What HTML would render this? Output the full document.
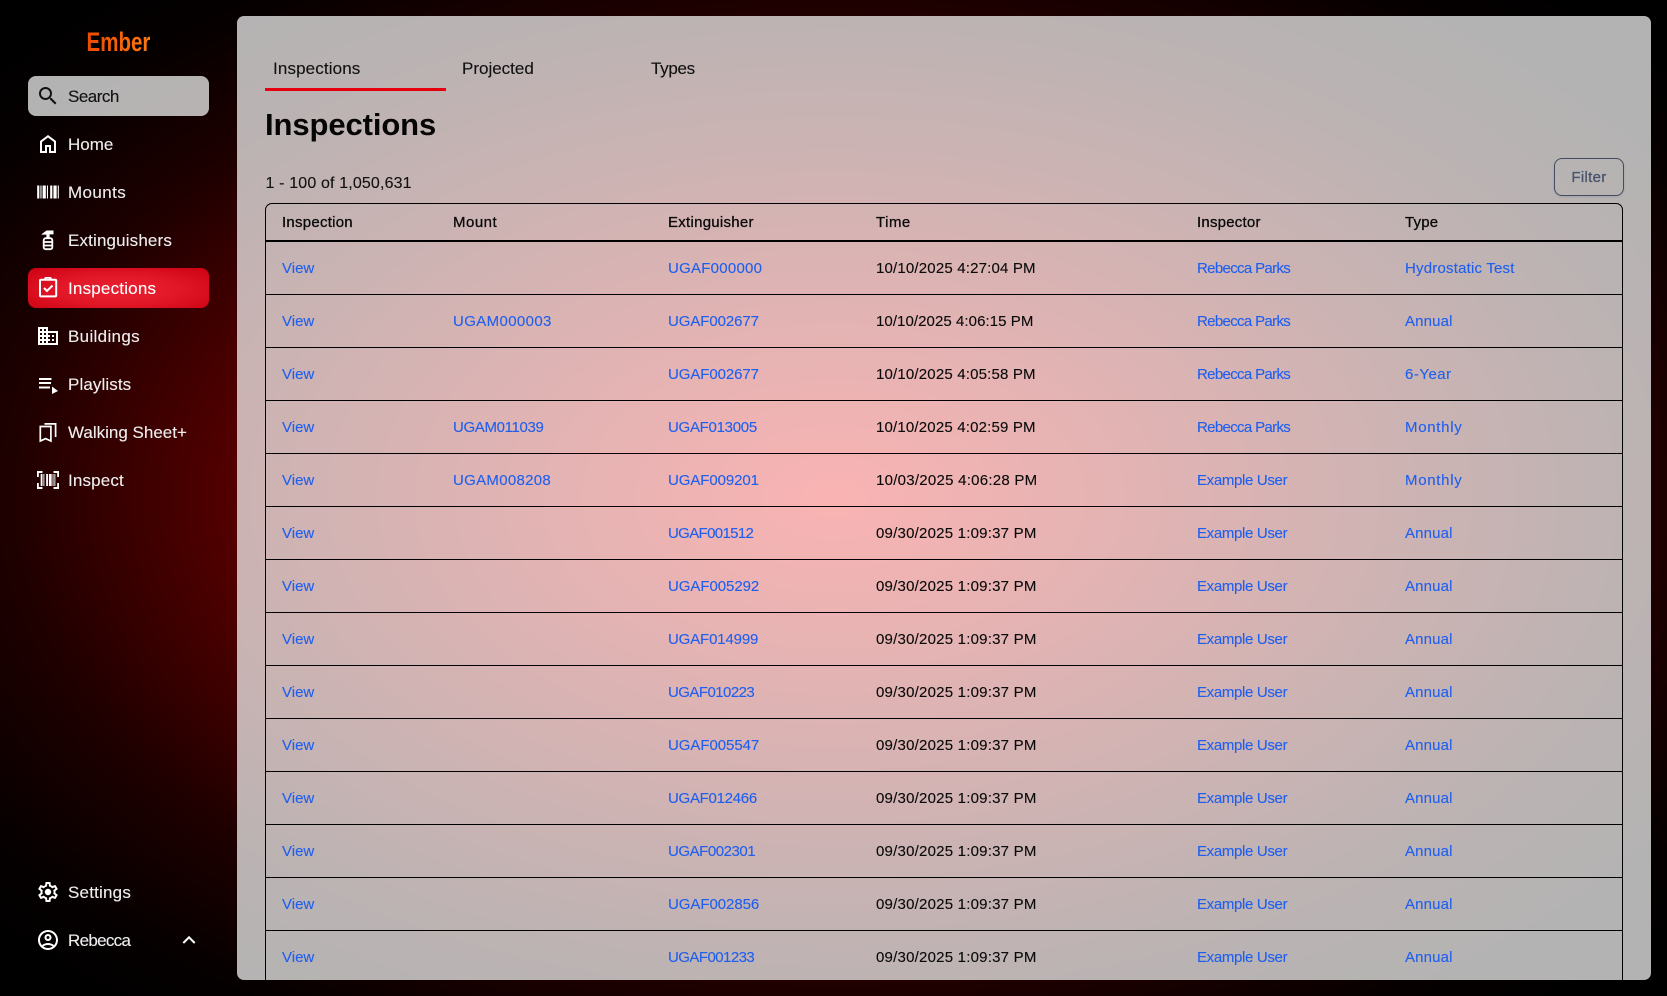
<!DOCTYPE html>
<html lang="en"><head><meta charset="utf-8"><title>Ember - Inspections</title>
<style>
*{box-sizing:border-box}
html,body{margin:0;padding:0;width:1667px;height:996px;overflow:hidden}
body{font-family:"Liberation Sans",sans-serif;background:radial-gradient(ellipse farthest-corner at 50% 50%,rgb(238,0,0) 0,rgb(85,0,0) 50%,rgb(30,0,0) 70%,rgb(6,0,0) 85%,#000 95%);position:relative;color:#0a0a0a}
.logo{position:absolute;left:28px;width:181px;top:26px;text-align:center;font-size:27px;font-weight:700;line-height:32px;height:32px;transform:scaleX(.76)}
.logo span{background:linear-gradient(90deg,#ee4a00,#ff7a10);-webkit-background-clip:text;background-clip:text;color:transparent}
.nav{position:absolute;left:28px;width:181px;height:40px;border-radius:8px;color:#eee;font-size:17px;line-height:41px;padding-left:40px;white-space:nowrap;-webkit-text-stroke:.12px}
.nav svg{position:absolute;left:8px;top:8px;width:24px;height:24px;fill:#fff}
.nav.search{background:rgba(255,255,255,.7);color:#111;letter-spacing:-.5px}
.nav.search svg{fill:#111}
.nav.on{background:radial-gradient(ellipse at 50% 55%,#e9202f 0,#e21828 45%,#cb0012 100%);color:#fff}
.main{position:absolute;left:237px;top:16px;width:1414px;height:964px;background:rgba(255,255,255,.7);border-radius:7px;overflow:hidden}
.tab{position:absolute;top:41px;font-size:17px;line-height:24px;color:#111;white-space:nowrap;-webkit-text-stroke:.12px}
.ul{position:absolute;left:28px;top:72px;width:181px;height:3px;background:#e6000f}
h1{position:absolute;margin:0;left:28px;top:90px;font-size:31px;line-height:38px;font-weight:700;letter-spacing:-.1px;color:#050505}
.count{position:absolute;left:28.5px;top:157px;font-size:16px;line-height:22px;letter-spacing:.15px;color:#111;-webkit-text-stroke:.12px}
.filter{position:absolute;left:1317px;top:142px;width:70px;height:38px;border:1px solid #3f4c61;border-radius:8px;font-size:15px;line-height:37px;text-align:center;color:#47536a;-webkit-text-stroke:.25px #47536a;letter-spacing:.3px;box-shadow:0 1px 2px rgba(0,0,0,.1)}
.wrap{position:absolute;left:28px;top:187px;width:1358px;border:1px solid #000;border-bottom:0;border-radius:7px 7px 0 0}
table{border-collapse:separate;border-spacing:0;table-layout:fixed;width:1356px;font-size:15px}
th{height:38px;border-bottom:2px solid #000;text-align:left;font-weight:400;padding:0 0 0 16px;-webkit-text-stroke:.3px #0a0a0a;white-space:nowrap}
td{height:53px;border-bottom:1px solid #000;padding:0 0 0 16px;white-space:nowrap;color:#0a0a0a;-webkit-text-stroke:.12px}
a{color:#1f5ff0;text-decoration:none}
.t{letter-spacing:.18px}
.r{letter-spacing:-.66px}
.e{letter-spacing:-.33px}
.m{letter-spacing:.7px}
.n{letter-spacing:.15px}
</style></head>
<body>
<div class="logo"><span>Ember</span></div>
<div class="nav search" style="top:76px"><svg viewBox="0 0 24 24"><path d="M15.5 14h-.79l-.28-.27A6.471 6.471 0 0 0 16 9.5 6.5 6.5 0 1 0 9.5 16c1.61 0 3.09-.59 4.23-1.57l.27.28v.79l5 4.99L20.49 19l-4.99-5zm-6 0C7.01 14 5 11.99 5 9.5S7.01 5 9.5 5 14 7.01 14 9.5 11.99 14 9.5 14z"/></svg>Search</div>
<div class="nav" style="top:124px"><svg viewBox="0 0 24 24"><path d="M6 19h3v-6h6v6h3v-9l-6-4.5L6 10v9Zm-2 2V9l8-6 8 6v12h-7v-6h-2v6H4Z"/></svg>Home</div>
<div class="nav" style="top:172px;letter-spacing:.4px"><svg viewBox="0 0 24 24" style="left:7px;top:7px;width:26px;height:26px"><path d="M2 6h2v12H2V6zm3 0h1v12H5V6zm2 0h3v12H7V6zm4 0h1v12h-1V6zm3 0h2v12h-2V6zm3 0h3v12h-3V6zm4 0h1v12h-1V6z"/></svg>Mounts</div>
<div class="nav" style="top:220px;letter-spacing:.15px"><svg viewBox="0 0 24 24"><path d="M5.500 6.200 10.500 2.500h7V6.400H13.600V10h-3.200V6.600H5.500z"/><rect x="7.700" y="10.200" width="8.600" height="11" rx="2" fill="none" stroke="#fff" stroke-width="1.800"/><path d="M8 14h8M8 17.500h8" stroke="#fff" stroke-width="1.700"/></svg>Extinguishers</div>
<div class="nav on" style="top:268px;letter-spacing:.2px"><svg viewBox="0 0 24 24"><rect x="4" y="3.800" width="16.200" height="16.600" rx="1" fill="none" stroke="#fff" stroke-width="2"/><path d="M9 3.800v-1a1 1 0 0 1 1-1h4a1 1 0 0 1 1 1v1" fill="none" stroke="#fff" stroke-width="1.600"/><path d="M8 12l3 3 5.500-5.500" fill="none" stroke="#fff" stroke-width="2"/></svg>Inspections</div>
<div class="nav" style="top:316px;letter-spacing:.33px"><svg viewBox="0 0 24 24"><path d="M12 7V3H2v18h20V7H12zM6 19H4v-2h2v2zm0-4H4v-2h2v2zm0-4H4V9h2v2zm0-4H4V5h2v2zm4 12H8v-2h2v2zm0-4H8v-2h2v2zm0-4H8V9h2v2zm0-4H8V5h2v2zm10 12h-8v-2h2v-2h-2v-2h2v-2h-2V9h8v10zm-2-8h-2v2h2v-2zm0 4h-2v2h2v-2z"/></svg>Buildings</div>
<div class="nav" style="top:364px;letter-spacing:.1px"><svg viewBox="0 0 24 24"><path d="M3 8V6h12.500v2H3Zm0 4v-2h12v2H3Zm0 4.500v-2h11v2H3Zm13 5.500v-7.500l6 4.500-6 3Z"/></svg>Playlists</div>
<div class="nav" style="top:412px"><svg viewBox="0 0 24 24"><path d="M4.300 6.500h10.600V21l-5.300-2.400L4.300 21zM8.500 3.900H19.600V17" fill="none" stroke="#fff" stroke-width="1.700"/></svg>Walking Sheet+</div>
<div class="nav" style="top:460px;letter-spacing:.15px"><svg viewBox="0 0 24 24" preserveAspectRatio="none" style="left:9px;width:22px"><path d="M0 21v-6h2v4h4v2H0Zm18 0v-2h4v-4h2v6h-6ZM4 18V6h2v12H4Zm3 0V6h1v12H7Zm3 0V6h2v12h-2Zm3 0V6h3v12h-3Zm4 0V6h1v12h-1Zm2 0V6h1v12h-1ZM0 9V3h6v2H2v4H0Zm22 0V5h-4V3h6v6h-2Z"/></svg>Inspect</div>
<div class="nav" style="top:872px;letter-spacing:.2px"><svg viewBox="0 0 24 24"><path d="M19.430 12.980c.04-.32.07-.64.07-.98 0-.34-.03-.66-.07-.98l2.110-1.650c.19-.15.24-.42.12-.64l-2-3.460c-.09-.16-.26-.25-.44-.25-.06 0-.12.01-.17.03l-2.490 1c-.52-.4-1.080-.73-1.690-.98l-.38-2.650C14.460 2.180 14.250 2 14 2h-4c-.25 0-.46.18-.49.42l-.38 2.650c-.61.25-1.170.59-1.690.98l-2.490-1c-.06-.02-.12-.03-.18-.03-.17 0-.34.09-.43.25l-2 3.460c-.13.22-.07.49.12.64l2.110 1.650c-.04.32-.07.65-.07.98 0 .33.03.66.07.98l-2.110 1.650c-.19.15-.24.42-.12.64l2 3.460c.09.16.26.25.44.25.06 0 .12-.01.17-.03l2.490-1c.52.4 1.080.73 1.690.98l.38 2.650c.03.24.24.42.49.42h4c.25 0 .46-.18.49-.42l.38-2.650c.61-.25 1.170-.59 1.690-.98l2.490 1c.06.02.12.03.18.03.17 0 .34-.09.43-.25l2-3.460c.12-.22.07-.49-.12-.64l-2.110-1.650zm-1.980-1.710c.04.31.05.52.05.73 0 .21-.02.43-.05.73l-.14 1.130.89.7 1.080.84-.7 1.210-1.270-.51-1.040-.42-.9.68c-.43.32-.84.56-1.250.73l-1.060.43-.16 1.130-.2 1.350h-1.400l-.19-1.350-.16-1.130-1.060-.43c-.43-.18-.83-.41-1.230-.71l-.91-.7-1.060.43-1.270.51-.7-1.210 1.080-.84.89-.7-.14-1.130c-.03-.31-.05-.54-.05-.74s.02-.43.05-.73l.14-1.130-.89-.7-1.080-.84.7-1.210 1.270.51 1.040.42.9-.68c.43-.32.84-.56 1.250-.73l1.060-.43.16-1.130.2-1.350h1.390l.19 1.350.16 1.130 1.060.43c.43.18.83.41 1.230.71l.91.7 1.060-.43 1.270-.51.7 1.210-1.070.85-.89.7.14 1.130z"/><circle cx="12" cy="12" r="3.200"/></svg>Settings</div>
<div class="nav" style="top:920px;letter-spacing:-.7px"><svg viewBox="0 0 24 24"><path d="M12 2C6.480 2 2 6.480 2 12s4.480 10 10 10 10-4.480 10-10S17.520 2 12 2zM7.350 18.500C8.660 17.560 10.260 17 12 17s3.340.56 4.650 1.500C15.340 19.440 13.740 20 12 20s-3.340-.56-4.650-1.500zm10.790-1.380C16.450 15.800 14.320 15 12 15s-4.450.8-6.140 2.120C4.700 15.730 4 13.950 4 12c0-4.420 3.580-8 8-8s8 3.580 8 8c0 1.950-.7 3.730-1.860 5.120zM12 6c-1.930 0-3.500 1.570-3.500 3.500S10.070 13 12 13s3.500-1.570 3.500-3.500S13.930 6 12 6zm0 5c-.83 0-1.500-.67-1.500-1.500S11.170 8 12 8s1.500.67 1.500 1.500S12.830 11 12 11z"/></svg>Rebecca<svg viewBox="0 0 24 24" style="left:149px;top:8px"><path d="M6.300 15 12 9.300 17.700 15" fill="none" stroke="#fff" stroke-width="2"/></svg></div>

<div class="main">
<div class="tab" style="left:36px;letter-spacing:.13px">Inspections</div>
<div class="tab" style="left:225px">Projected</div>
<div class="tab" style="left:414px;letter-spacing:-.3px">Types</div>
<div class="ul"></div>
<h1>Inspections</h1>
<div class="count">1 - 100 of 1,050,631</div>
<div class="filter">Filter</div>
<div class="wrap">
<table>
<colgroup><col style="width:171px"><col style="width:215px"><col style="width:208px"><col style="width:321px"><col style="width:208px"><col style="width:233px"></colgroup>
<thead><tr><th style="letter-spacing:.25px">Inspection</th><th style="letter-spacing:.5px">Mount</th><th style="letter-spacing:.27px">Extinguisher</th><th style="letter-spacing:.5px">Time</th><th style="letter-spacing:.22px">Inspector</th><th style="letter-spacing:.2px">Type</th></tr></thead>
<tbody>
<tr><td><a>View</a></td><td></td><td><a style="letter-spacing:.25px">UGAF000000</a></td><td class="t">10/10/2025 4:27:04 PM</td><td><a class="r">Rebecca Parks</a></td><td><a style="letter-spacing:.2px">Hydrostatic Test</a></td></tr>
<tr><td><a>View</a></td><td><a style="letter-spacing:.37px">UGAM000003</a></td><td><a style="letter-spacing:-.08px">UGAF002677</a></td><td class="t" style="letter-spacing:.07px">10/10/2025 4:06:15 PM</td><td><a class="r">Rebecca Parks</a></td><td><a class="n">Annual</a></td></tr>
<tr><td><a>View</a></td><td></td><td><a style="letter-spacing:-.08px">UGAF002677</a></td><td class="t">10/10/2025 4:05:58 PM</td><td><a class="r">Rebecca Parks</a></td><td><a style="letter-spacing:.5px">6-Year</a></td></tr>
<tr><td><a>View</a></td><td><a style="letter-spacing:-.35px">UGAM011039</a></td><td><a style="letter-spacing:-.28px">UGAF013005</a></td><td class="t">10/10/2025 4:02:59 PM</td><td><a class="r">Rebecca Parks</a></td><td><a class="m">Monthly</a></td></tr>
<tr><td><a>View</a></td><td><a style="letter-spacing:.3px">UGAM008208</a></td><td><a style="letter-spacing:-.08px">UGAF009201</a></td><td class="t" style="letter-spacing:.26px">10/03/2025 4:06:28 PM</td><td><a class="e">Example User</a></td><td><a class="m">Monthly</a></td></tr>
<tr><td><a>View</a></td><td></td><td><a style="letter-spacing:-.65px">UGAF001512</a></td><td class="t" style="letter-spacing:.22px">09/30/2025 1:09:37 PM</td><td><a class="e">Example User</a></td><td><a class="n">Annual</a></td></tr>
<tr><td><a>View</a></td><td></td><td><a style="letter-spacing:-.05px">UGAF005292</a></td><td class="t" style="letter-spacing:.22px">09/30/2025 1:09:37 PM</td><td><a class="e">Example User</a></td><td><a class="n">Annual</a></td></tr>
<tr><td><a>View</a></td><td></td><td><a style="letter-spacing:-.15px">UGAF014999</a></td><td class="t" style="letter-spacing:.22px">09/30/2025 1:09:37 PM</td><td><a class="e">Example User</a></td><td><a class="n">Annual</a></td></tr>
<tr><td><a>View</a></td><td></td><td><a style="letter-spacing:-.55px">UGAF010223</a></td><td class="t" style="letter-spacing:.22px">09/30/2025 1:09:37 PM</td><td><a class="e">Example User</a></td><td><a class="n">Annual</a></td></tr>
<tr><td><a>View</a></td><td></td><td><a style="letter-spacing:-.05px">UGAF005547</a></td><td class="t" style="letter-spacing:.22px">09/30/2025 1:09:37 PM</td><td><a class="e">Example User</a></td><td><a class="n">Annual</a></td></tr>
<tr><td><a>View</a></td><td></td><td><a style="letter-spacing:-.28px">UGAF012466</a></td><td class="t" style="letter-spacing:.22px">09/30/2025 1:09:37 PM</td><td><a class="e">Example User</a></td><td><a class="n">Annual</a></td></tr>
<tr><td><a>View</a></td><td></td><td><a style="letter-spacing:-.45px">UGAF002301</a></td><td class="t" style="letter-spacing:.22px">09/30/2025 1:09:37 PM</td><td><a class="e">Example User</a></td><td><a class="n">Annual</a></td></tr>
<tr><td><a>View</a></td><td></td><td><a style="letter-spacing:-.05px">UGAF002856</a></td><td class="t" style="letter-spacing:.22px">09/30/2025 1:09:37 PM</td><td><a class="e">Example User</a></td><td><a class="n">Annual</a></td></tr>
<tr><td><a>View</a></td><td></td><td><a style="letter-spacing:-.55px">UGAF001233</a></td><td class="t" style="letter-spacing:.22px">09/30/2025 1:09:37 PM</td><td><a class="e">Example User</a></td><td><a class="n">Annual</a></td></tr>
</tbody>
</table>
</div>
</div>
</body></html>
